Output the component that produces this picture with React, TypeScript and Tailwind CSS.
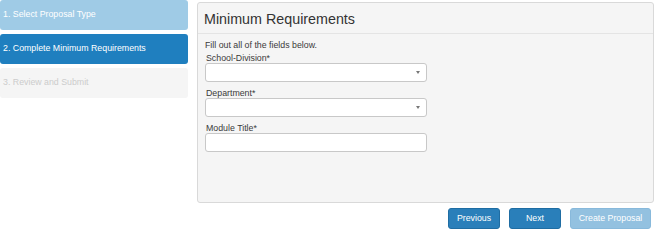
const steps = [
  { label: "1. Select Proposal Type", state: "done" },
  { label: "2. Complete Minimum Requirements", state: "active" },
  { label: "3. Review and Submit", state: "todo" },
];

export default function App() {
  return (
    <div className="w-[658px] h-[237px] bg-white font-['Liberation_Sans',Arial,sans-serif] overflow-hidden">
      <div className="flex gap-[9px] pr-[4px]">
        {/* Steps */}
        <nav className="w-[188px] flex flex-col gap-[4px] shrink-0">
          {steps.map((s) => (
            <div
              key={s.label}
              className={
                "h-[30px] rounded-[3px] px-[3px] flex items-center text-[8.8px] " +
                (s.state === "done"
                  ? "bg-[#9fcbe6] text-white"
                  : s.state === "active"
                  ? "bg-[#1f7fbf] text-white"
                  : "bg-[#f5f5f5] text-[#cccccc]")
              }
            >
              {s.label}
            </div>
          ))}
        </nav>

        <div className="flex-1 flex flex-col">
          {/* Panel */}
          <section className="mt-[2px] h-[201px] bg-[#f5f5f5] border border-[#d9d9d9] rounded-[3px]">
            <h1 className="h-[31px] px-[6px] pt-[7px] border-b border-[#e4e4e4] text-[14.3px] text-[#333] leading-[18px]">
              Minimum Requirements
            </h1>
            <div className="px-[7px] pt-[6px] text-[8.8px] text-[#3a3a3a] leading-[10px]">
              <p>Fill out all of the fields below.</p>
              <div className="mt-[3px] flex flex-col gap-[6px]">
                <Field label="School-Division*" select />
                <Field label="Department*" select />
                <Field label="Module Title*" />
              </div>
            </div>
          </section>

          {/* Actions */}
          <div className="flex justify-end gap-[9px] mt-[5px] pr-[3px]">
            <button className="w-[52px] h-[21px] rounded-[3px] bg-[#2a7fba] border border-[#1f6da3] text-white text-[8.8px]">
              Previous
            </button>
            <button className="w-[52px] h-[21px] rounded-[3px] bg-[#2a7fba] border border-[#1f6da3] text-white text-[8.8px]">
              Next
            </button>
            <button className="w-[81px] h-[21px] rounded-[3px] bg-[#93c1e0] border border-[#88b9db] text-white text-[8.8px]">
              Create Proposal
            </button>
          </div>
        </div>
      </div>
    </div>
  );
}

function Field({ label, select = false }: { label: string; select?: boolean }) {
  return (
    <div>
      <div className="h-[10px] ml-[1px]">{label}</div>
      <div className="w-[222px] h-[19px] bg-white border border-[#c8c8c8] rounded-[3px] flex items-center justify-end pr-[6px]">
        {select && (
          <span className="w-0 h-0 border-l-[2.5px] border-r-[2.5px] border-t-[3px] border-l-transparent border-r-transparent border-t-[#777]" />
        )}
      </div>
    </div>
  );
}
